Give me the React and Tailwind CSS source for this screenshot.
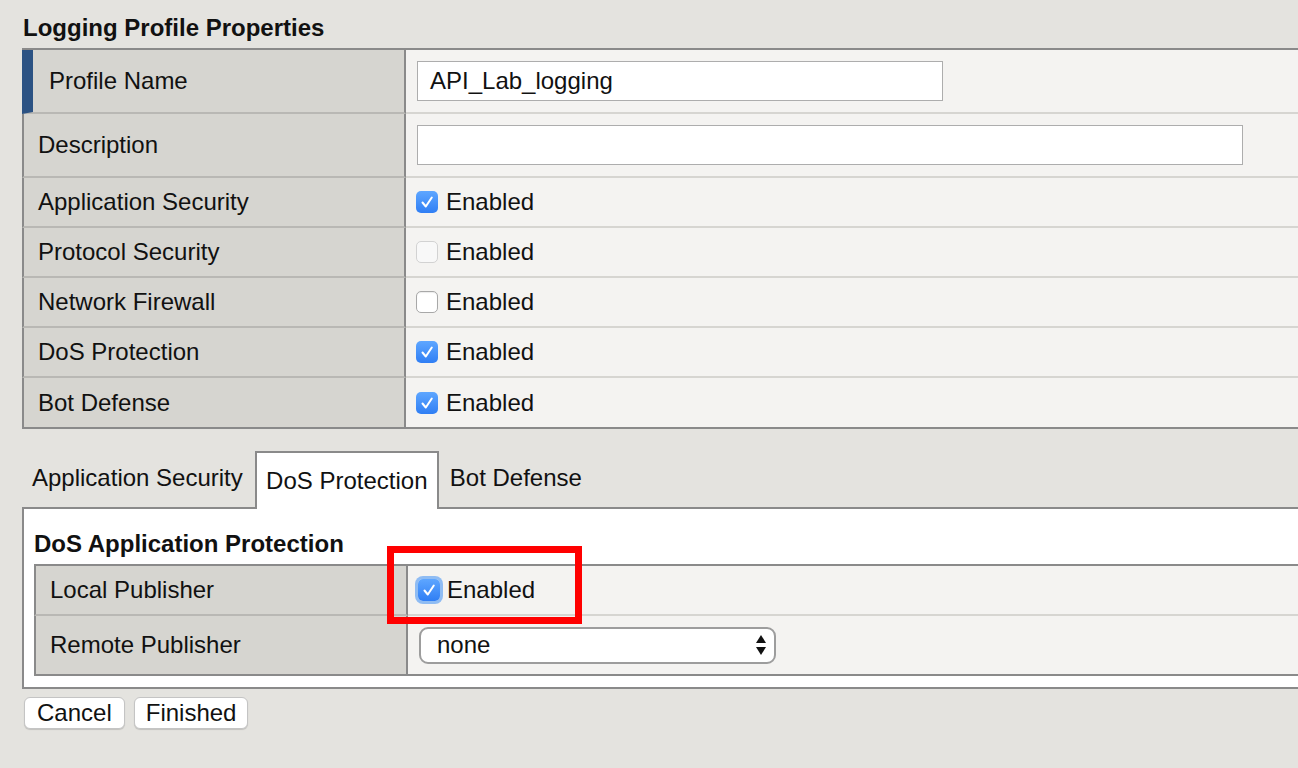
import React from "react";

const ROWS = [
  { label: "Application Security", state: "on" },
  { label: "Protocol Security", state: "disabled" },
  { label: "Network Firewall", state: "off" },
  { label: "DoS Protection", state: "on" },
  { label: "Bot Defense", state: "on", last: true }
];

export default function App() {
  return (
    <div className="relative w-[1298px] h-[768px] overflow-hidden bg-[#e4e3df] text-[24px] text-[#111] font-['Liberation_Sans',Arial,sans-serif]">
      {/* ===== TITLE ===== */}
      <div className="h-[48px] pt-[14px] pl-[23px] leading-[28px] font-bold">
        Logging Profile Properties
      </div>

      {/* ===== PROPERTIES TABLE ===== */}
      <div className="ml-[22px] border-t-2 border-[#8a8a8a]">
        <div className="flex h-[64px]">
          <div className="w-[384px] border-l-[11px] border-l-[#2b5283] border-r-2 border-r-[#8a8a8a] border-b-2 border-b-[#b9b8b4] bg-[#d6d5d0] pl-[16px] flex items-center">
            Profile Name
          </div>
          <div className="flex-1 bg-[#f4f3f1] border-b-2 border-[#d6d5d1] pl-[11px] flex items-center">
            <div className="w-[526px] h-[40px] bg-white border border-[#adadad] pl-[12px] flex items-center">
              API_Lab_logging
            </div>
          </div>
        </div>
        <div className="flex h-[64px]">
          <div className="w-[384px] border-l-2 border-l-[#8a8a8a] border-r-2 border-r-[#8a8a8a] border-b-2 border-b-[#b9b8b4] bg-[#d6d5d0] pl-[14px] flex items-center">
            Description
          </div>
          <div className="flex-1 bg-[#f4f3f1] border-b-2 border-[#d6d5d1] pl-[11px] flex items-center">
            <div className="w-[826px] h-[40px] bg-white border border-[#adadad]" />
          </div>
        </div>
        {ROWS.map(r => (
          <div key={r.label} className={r.last ? "flex h-[51px] border-b-2 border-[#8a8a8a]" : "flex h-[50px]"}>
            <div className={"w-[384px] border-l-2 border-l-[#8a8a8a] border-r-2 border-r-[#8a8a8a] bg-[#d6d5d0] pl-[14px] flex items-center " + (r.last ? "" : "border-b-2 border-b-[#b9b8b4]")}>
              {r.label}
            </div>
            <div className={"flex-1 bg-[#f4f3f1] pl-[10px] flex items-center gap-[8px] " + (r.last ? "" : "border-b-2 border-[#d6d5d1]")}>
              <Checkbox state={r.state} />
              <span>Enabled</span>
            </div>
          </div>
        ))}
      </div>

      {/* ===== TABS ===== */}
      <div className="ml-[22px] mt-[22px] flex items-stretch h-[58px] relative z-10">
        <div className="pl-[10px] pr-[12px] flex items-center pb-[4px]">Application Security</div>
        <div className="w-[184px] bg-white border-2 border-b-0 border-[#8a8a8a] flex items-center justify-center">
          DoS Protection
        </div>
        <div className="pl-[11px] flex items-center pb-[4px]">Bot Defense</div>
      </div>

      {/* ===== TAB PANEL ===== */}
      <div className="ml-[22px] -mt-[2px] bg-white border-2 border-r-0 border-[#8a8a8a] pb-[11px]">
        <div className="pt-[21px] pl-[10px] leading-[28px] font-bold h-[55px]">
          DoS Application Protection
        </div>
        <div className="ml-[10px] border-t-2 border-b-2 border-[#8a8a8a]">
          <div className="flex h-[50px]">
            <div className="w-[374px] border-l-2 border-l-[#8a8a8a] border-r-2 border-r-[#8a8a8a] border-b-2 border-b-[#b9b8b4] bg-[#d6d5d0] pl-[14px] flex items-center">
              Local Publisher
            </div>
            <div className="flex-1 bg-[#f4f3f1] border-b-2 border-[#d6d5d1] pl-[10px] flex items-center gap-[7px]">
              <Checkbox state="on" focus />
              <span>Enabled</span>
            </div>
          </div>
          <div className="flex h-[58px]">
            <div className="w-[374px] border-l-2 border-l-[#8a8a8a] border-r-2 border-r-[#8a8a8a] bg-[#d6d5d0] pl-[14px] flex items-center">
              Remote Publisher
            </div>
            <div className="flex-1 bg-[#f4f3f1] pl-[11px] flex items-center">
              <div className="w-[357px] h-[37px] bg-white border-2 border-[#9d9d9d] rounded-[9px] pl-[16px] pr-[8px] flex items-center justify-between">
                <span>none</span>
                <svg width="10" height="22" viewBox="0 0 10 22">
                  <path d="M5 1 L10 9 L0 9 Z" fill="#111" />
                  <path d="M0 13 L10 13 L5 21 Z" fill="#111" />
                </svg>
              </div>
            </div>
          </div>
        </div>
      </div>

      {/* ===== BUTTONS ===== */}
      <div className="ml-[24px] mt-[8px] flex gap-[9px]">
        <button className="h-[32px] px-[12px] bg-white border border-[#c4c4c4] rounded-[6px] shadow-[0_1px_1px_rgba(0,0,0,0.15)] leading-none">
          Cancel
        </button>
        <button className="h-[32px] px-[11px] bg-white border border-[#c4c4c4] rounded-[6px] shadow-[0_1px_1px_rgba(0,0,0,0.15)] leading-none">
          Finished
        </button>
      </div>

      {/* annotation box */}
      <div className="absolute left-[387px] top-[546px] w-[195px] h-[78px] border-[7px] border-[#ff0000]" />
    </div>
  );
}

function Checkbox({ state, focus }) {
  if (state === "on") {
    return (
      <span
        className={
          "w-[22px] h-[22px] rounded-[5px] bg-gradient-to-b from-[#5ea6ff] to-[#2f7ef4] flex items-center justify-center " +
          (focus ? "ring-[3px] ring-[#8fbcf3]" : "")
        }
      >
        <svg width="16" height="16" viewBox="0 0 16 16" fill="none">
          <path d="M3.5 8.5 L6.8 12.5 L12.8 3.5" stroke="#fff" strokeWidth="2" strokeLinecap="round" strokeLinejoin="round" />
        </svg>
      </span>
    );
  }
  if (state === "disabled") {
    return <span className="w-[22px] h-[22px] rounded-[5px] bg-[#f8f8f8] border border-[#d2d2d2]" />;
  }
  return <span className="w-[22px] h-[22px] rounded-[5px] bg-white border border-[#a8a8a8] shadow-[inset_0_1px_1px_rgba(0,0,0,0.08)]" />;
}
